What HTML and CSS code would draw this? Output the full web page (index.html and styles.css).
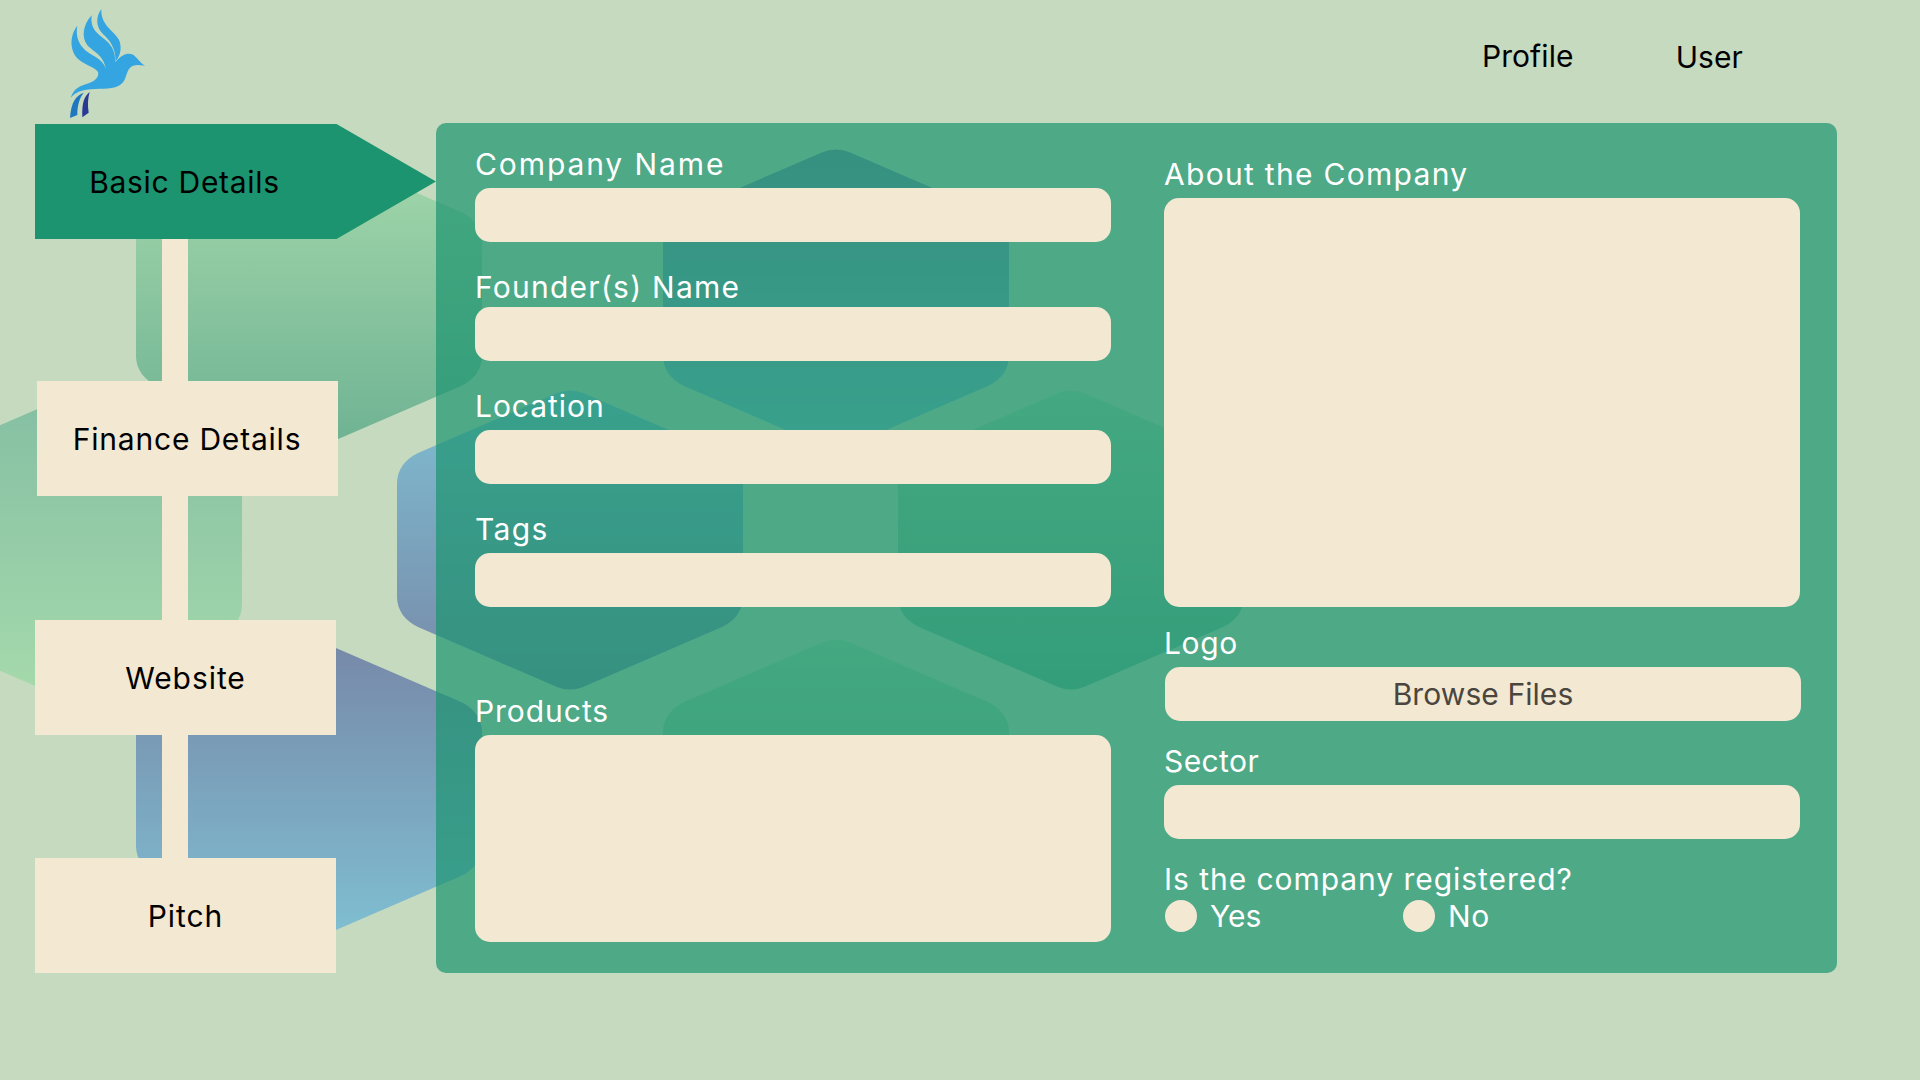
FILE: index.html
```html
<!DOCTYPE html>
<html lang="en">
<head>
<meta charset="utf-8">
<title>Basic Details</title>
<link rel="stylesheet" href="styles.css">
</head>
<body>
<svg class="backdrop" viewBox="0 0 1920 1080" aria-hidden="true">
  <defs>
    <path id="hex" d="M-173-57C-173-70-165-81-152-87L-13-147Q0-152 13-147L152-87C165-81 173-70 173-57V57C173 70 165 81 152 87L13 147Q0 152-13 147L-152 87C-165 81-173 70-173 57Z"/>
    <linearGradient id="green-down" x1="0" y1="0" x2="0" y2="1"><stop offset="0" stop-color="#a4d8ab"/><stop offset="1" stop-color="#6eb293"/></linearGradient>
    <linearGradient id="green-up" x1="0" y1="0" x2="0" y2="1"><stop offset="0" stop-color="#85bfa3"/><stop offset="1" stop-color="#a6daac"/></linearGradient>
    <linearGradient id="blue-down" x1="0" y1="0" x2="0" y2="1"><stop offset="0" stop-color="#7fbfd2"/><stop offset="1" stop-color="#7788a8"/></linearGradient>
    <linearGradient id="blue-up" x1="0" y1="0" x2="0" y2="1"><stop offset="0" stop-color="#7788a8"/><stop offset="1" stop-color="#7fbfd2"/></linearGradient>
  </defs>
  <use href="#hex" x="309" y="299" fill="url(#green-down)"/>
  <use href="#hex" x="836" y="299" fill="url(#blue-up)"/>
  <use href="#hex" x="69" y="548" fill="url(#green-up)"/>
  <use href="#hex" x="570" y="540" fill="url(#blue-down)"/>
  <use href="#hex" x="1071" y="540" fill="url(#green-down)"/>
  <use href="#hex" x="309" y="789" fill="url(#blue-up)"/>
  <use href="#hex" x="836" y="789" fill="url(#green-down)"/>
</svg>

<header class="topbar">
  <svg class="logo" viewBox="0 0 330 369" role="img" aria-label="Bird logo">
    <path fill="#34a5e0" d="M82 77C57 108 59 157 88 180C109 197 134 201 144 216C148 230 136 243 116 250C91 258 73 263 62 293C77 276 96 270 124 268C157 265 193 270 213 253C233 237 226 207 249 197C262 193 273 196 285 197C270 190 261 170 246 163C231 158 216 164 196 186C196 160 189 140 169 122C142 100 120 88 125 46C98 76 94 112 112 136C130 156 158 162 168 206C160 187 149 178 132 168C98 149 74 124 82 77Z"/>
    <path fill="#34a5e0" d="M154 27C137 49 137 81 158 101C180 121 197 143 197 184C215 164 215 135 206 118C190 91 151 74 154 27Z"/>
    <path fill="#1f78bf" d="M101 278C78 287 63 305 60 354L82 345C82 315 88 296 101 278Z"/>
    <path fill="#2a3a92" d="M119 276C103 288 95 309 97 352L116 338C112 314 114 293 119 276Z"/>
  </svg>
  <nav class="menu">
    <a class="menu-link">Profile</a>
    <a class="menu-link menu-user">User</a>
  </nav>
</header>

<main class="content">
  <nav class="steps">
    <a class="step step-active">Basic Details</a>
    <span class="connector connector-long"></span>
    <a class="step step-finance">Finance Details</a>
    <span class="connector"></span>
    <a class="step">Website</a>
    <span class="connector connector-last"></span>
    <a class="step">Pitch</a>
  </nav>

  <form class="panel">
    <div class="column">
      <label class="field company"><span class="label">Company Name</span><input class="control" type="text"></label>
      <label class="field founder"><span class="label">Founder(s) Name</span><input class="control" type="text"></label>
      <label class="field"><span class="label">Location</span><input class="control" type="text"></label>
      <label class="field tags"><span class="label">Tags</span><input class="control" type="text"></label>
      <label class="field products"><span class="label">Products</span><textarea class="control"></textarea></label>
    </div>
    <div class="column column-right">
      <label class="field about"><span class="label">About the Company</span><textarea class="control"></textarea></label>
      <div class="field logo-field"><span class="label">Logo</span><button class="control browse" type="button">Browse Files</button></div>
      <label class="field sector"><span class="label">Sector</span><input class="control" type="text"></label>
      <div class="registered">
        <span class="label">Is the company registered?</span>
        <div class="choices">
          <label class="choice"><input class="radio" type="radio" name="registered"><span class="yes">Yes</span></label>
          <label class="choice"><input class="radio" type="radio" name="registered"><span class="no">No</span></label>
        </div>
      </div>
    </div>
  </form>
</main>
</body>
</html>
```
FILE: styles.css
```css
* { box-sizing: border-box; }

body {
  margin: 0;
  width: 1920px;
  height: 1080px;
  overflow: hidden;
  background: #c6dabf;
  color: #000;
  font: 400 30px/40px Inter, "Open Sans", sans-serif;
  letter-spacing: 0.95px;
}

.backdrop {
  position: absolute;
  inset: 0;
  z-index: -1;
  width: 1920px;
  height: 1080px;
}

.topbar {
  display: flex;
  justify-content: space-between;
  height: 123px;
  padding: 0 177px 0 50px;
}

.logo { width: 110px; height: 123px; }

.menu {
  display: flex;
  gap: 102px;
  padding-top: 36px;
  letter-spacing: 0.1px;
}

.menu-user { padding-top: 1px; }

.content { display: flex; height: 850px; }

.steps {
  display: flex;
  flex-direction: column;
  width: 436px;
  padding: 1px 0 0 35px;
}

.step {
  display: flex;
  align-items: center;
  justify-content: center;
  width: 301px;
  height: 115px;
  background: #f3e8d2;
}

.step-active {
  width: 401px;
  padding-right: 102px;
  background: #1b946f;
  clip-path: polygon(0 0, 301.5px 0, 100% 50%, 301.5px 100%, 0 100%);
  letter-spacing: 0.7px;
}

.step-finance { margin-left: 2px; padding-right: 1px; letter-spacing: 0.8px; }

.connector {
  width: 26px;
  height: 124px;
  margin-left: 127px;
  background: #f3e8d2;
}

.connector-long { height: 142px; }
.connector-last { height: 123px; }

.panel {
  display: grid;
  grid-template-columns: 636px 637px;
  gap: 53px;
  width: 1401px;
  height: 850px;
  padding: 21px 0 0 39px;
  border-radius: 10px;
  background: rgba(27, 148, 111, 0.7);
  color: #fff;
}

.column { display: flex; flex-direction: column; gap: 25px; }
.column-right { gap: 0; padding-top: 10px; }

.field { display: flex; flex-direction: column; gap: 4px; }
.label { display: block; height: 40px; white-space: nowrap; }

.control {
  display: block;
  width: 636px;
  height: 54px;
  padding: 0 16px;
  border: 0;
  border-radius: 15px;
  background: #f3e8d2;
  color: #000;
  font: inherit;
  resize: none;
  outline: none;
}

.company { letter-spacing: 1.9px; }
.founder { gap: 0; letter-spacing: 1.25px; }
.tags { letter-spacing: 1.4px; }
.products { margin-top: 59px; }
.products .control { height: 207px; }

.about { letter-spacing: 1.3px; }
.about .control { height: 409px; }
.logo-field { margin-top: 16px; letter-spacing: 0.6px; }

.browse {
  margin-left: 1px;
  color: #4a463f;
  letter-spacing: 0.08px;
}

.sector { margin-top: 20px; letter-spacing: 0.4px; }
.registered { margin-top: 20px; }

.choices { display: flex; padding: 1px 0 0 1px; }

.choice {
  display: flex;
  align-items: center;
  gap: 13px;
  width: 238px;
  height: 32px;
}

.radio {
  appearance: none;
  width: 32px;
  height: 32px;
  margin: 0;
  border-radius: 50%;
  background: #f3e8d2;
}

.yes { letter-spacing: 0; }
.no { letter-spacing: 0.6px; }
```
